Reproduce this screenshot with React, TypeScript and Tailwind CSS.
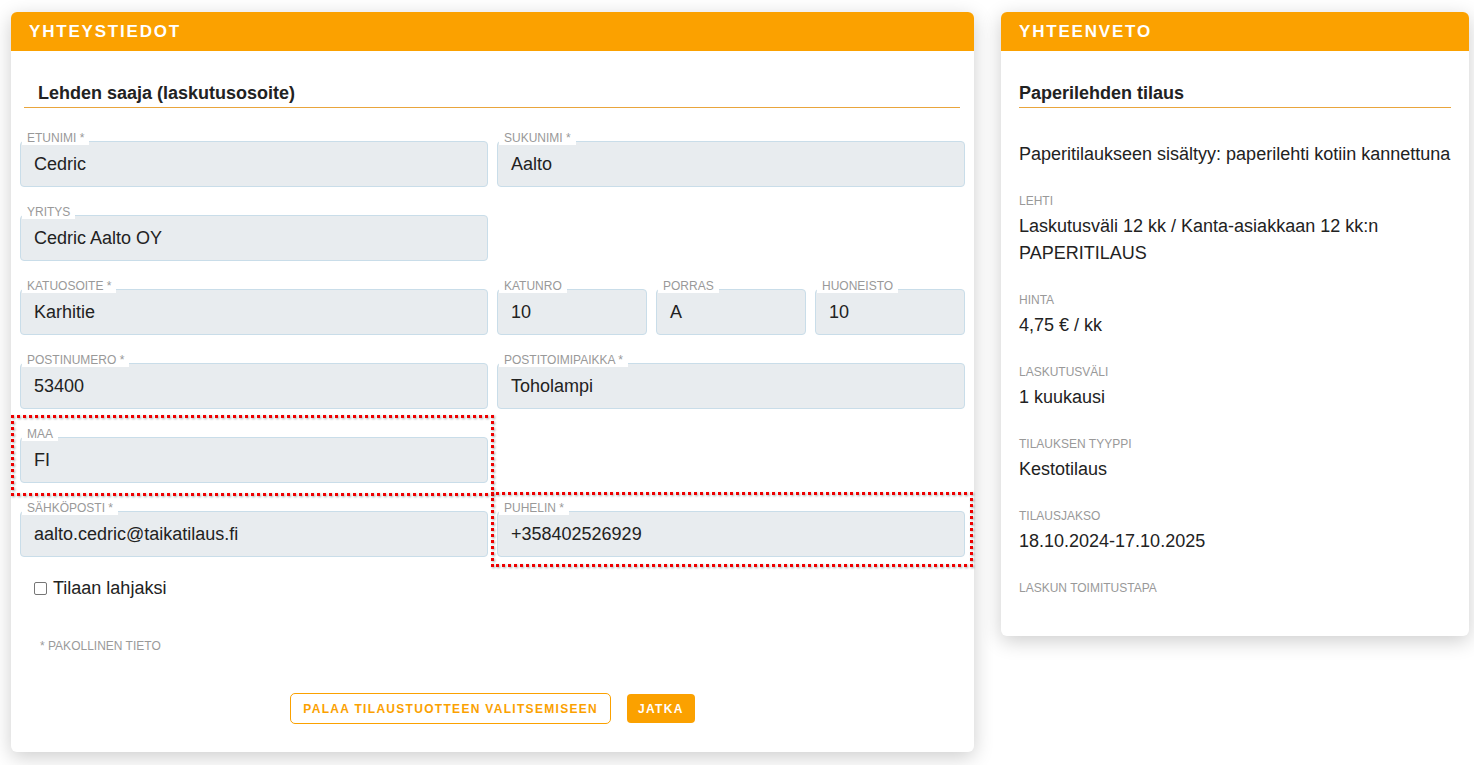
import React from "react";

const font = { fontFamily: '"Liberation Sans", Arial, sans-serif' };

function Field({
  label,
  value,
  className = "",
  children,
}: {
  label: string;
  value: string;
  className?: string;
  children?: React.ReactNode;
}) {
  return (
    <div className={"relative pt-[9px] " + className}>
      <div className="h-[46px] rounded-[4px] border border-[#c9dde9] bg-[#e8ecef] px-[13px] flex items-center text-[18px] text-[#222]">
        {value}
      </div>
      <span className="absolute left-[2px] top-0 bg-white px-[5px] text-[12px] leading-[13px] text-[#999]">
        {label}
      </span>
      {children}
    </div>
  );
}

function Card({ title, className = "", children }: { title: string; className?: string; children: React.ReactNode }) {
  return (
    <div
      className={
        "bg-white rounded-[6px] shadow-[0_5px_20px_rgba(0,0,0,0.2)] overflow-visible " + className
      }
    >
      <div className="h-[39px] bg-[#fba100] rounded-t-[6px] flex items-center px-[18px] text-white font-bold text-[17px] tracking-[1.8px]">
        {title}
      </div>
      {children}
    </div>
  );
}

function Item({ label, children }: { label: string; children?: React.ReactNode }) {
  return (
    <div className="mt-[25px]">
      <div className="text-[12px] leading-[16px] text-[#999]">{label}</div>
      {children ? <div className="mt-[4px] text-[18px] leading-[27px] text-[#222]">{children}</div> : null}
    </div>
  );
}

export default function App() {
  return (
    <div style={font} className="min-h-[765px] bg-white flex items-start gap-[27px] pl-[11px] pt-[12px]">
      <Card title="YHTEYSTIEDOT" className="w-[963px] h-[740px] flex flex-col">
        <div className="px-[9px] pt-[31px] flex flex-col flex-1">
          <div className="mx-[4px] mr-[5px] border-b border-[#e9a53c] pl-[14px] pb-[3px] text-[18px] leading-[22px] font-bold text-[#222]">
            Lehden saaja (laskutusosoite)
          </div>

          <div className="mt-[24px] grid grid-cols-2 gap-x-[9px] gap-y-[19px]">
            <Field label="ETUNIMI *" value="Cedric" />
            <Field label="SUKUNIMI *" value="Aalto" />
            <Field label="YRITYS" value="Cedric Aalto OY" />
            <div />
            <Field label="KATUOSOITE *" value="Karhitie" />
            <div className="grid grid-cols-3 gap-x-[9px]">
              <Field label="KATUNRO" value="10" />
              <Field label="PORRAS" value="A" />
              <Field label="HUONEISTO" value="10" />
            </div>
            <Field label="POSTINUMERO *" value="53400" />
            <Field label="POSTITOIMIPAIKKA *" value="Toholampi" />
            <Field label="MAA" value="FI">
              <div className="pointer-events-none absolute -left-[9px] -right-[6px] -top-[13px] -bottom-[13px] border-[3px] border-dotted border-[#ee0000] drop-shadow-[1px_1px_1px_rgba(0,0,0,0.35)]" />
            </Field>
            <div />
            <Field label="SÄHKÖPOSTI *" value="aalto.cedric@taikatilaus.fi" />
            <Field label="PUHELIN *" value="+358402526929">
              <div className="pointer-events-none absolute -left-[6px] -right-[8px] -top-[10px] -bottom-[10px] border-[3px] border-dotted border-[#ee0000] drop-shadow-[1px_1px_1px_rgba(0,0,0,0.35)]" />
            </Field>
          </div>

          <label className="mt-[20px] ml-[14px] flex items-center gap-[6px] text-[18px] leading-[22px] text-[#222]">
            <span className="w-[13px] h-[13px] rounded-[2px] border border-[#767676] bg-white inline-block" />
            Tilaan lahjaksi
          </label>

          <div className="mt-[40px] ml-[20px] text-[12px] leading-[14px] text-[#9a9a9a]">* PAKOLLINEN TIETO</div>

          <div className="mt-[40px] flex justify-center items-center gap-[16px]">
            <button className="h-[31px] px-[12px] border border-[#fba100] rounded-[5px] bg-white text-[#fba100] text-[12px] font-bold tracking-[1.3px]">
              PALAA TILAUSTUOTTEEN VALITSEMISEEN
            </button>
            <button className="h-[29px] px-[11px] rounded-[4px] bg-[#fba100] text-white text-[12px] font-bold tracking-[1.3px]">
              JATKA
            </button>
          </div>
        </div>
      </Card>

      <Card title="YHTEENVETO" className="w-[468px] h-[624px]">
        <div className="px-[18px] pt-[31px]">
          <div className="border-b border-[#e9a53c] pb-[3px] text-[18px] leading-[22px] font-bold text-[#222]">
            Paperilehden tilaus
          </div>
          <div className="mt-[33px] text-[18px] leading-[27px] text-[#222] whitespace-nowrap">
            Paperitilaukseen sisältyy: paperilehti kotiin kannettuna
          </div>
          <Item label="LEHTI">
            Laskutusväli 12 kk / Kanta-asiakkaan 12 kk:n
            <br />
            PAPERITILAUS
          </Item>
          <Item label="HINTA">4,75 € / kk</Item>
          <Item label="LASKUTUSVÄLI">1 kuukausi</Item>
          <Item label="TILAUKSEN TYYPPI">Kestotilaus</Item>
          <Item label="TILAUSJAKSO">18.10.2024-17.10.2025</Item>
          <Item label="LASKUN TOIMITUSTAPA" />
        </div>
      </Card>
    </div>
  );
}
